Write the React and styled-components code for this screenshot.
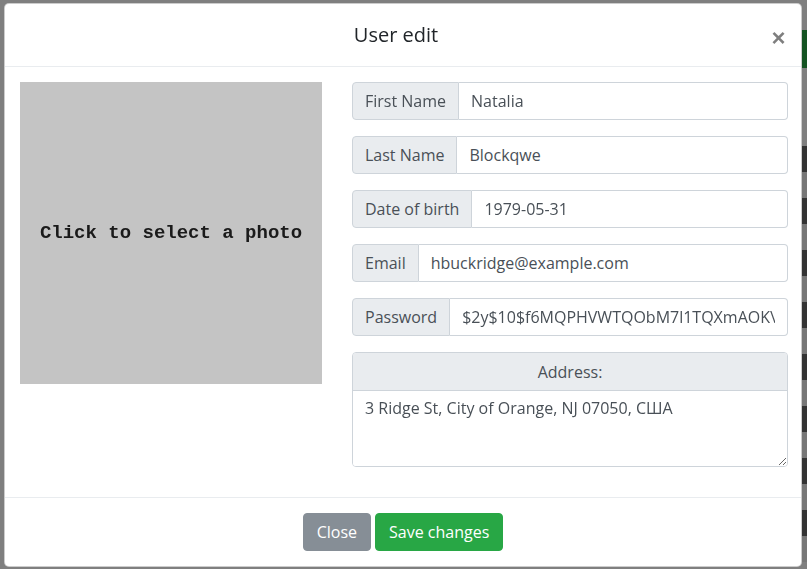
import styled, { createGlobalStyle } from 'styled-components'

const GlobalStyle = createGlobalStyle`
  html, body {
    margin: 0;
    padding: 0;
    height: 100%;
    overflow: hidden;
    background: #ffffff;
    font-family: "Open Sans", "Liberation Sans", sans-serif;
  }
  * { box-sizing: border-box; }
`

const fields = [
  { label: 'First Name', value: 'Natalia' },
  { label: 'Last Name', value: 'Blockqwe' },
  { label: 'Date of birth', value: '1979-05-31' },
  { label: 'Email', value: 'hbuckridge@example.com' },
  { label: 'Password', value: '$2y$10$f6MQPHVWTQObM7l1TQXmAOK\\' },
]

export default function App() {
  return (
    <>
      <GlobalStyle />
      <PageBehind>
        <BehindColumn>
          <BehindButton />
          <BehindBadge />
          {Array.from({ length: 16 }).map((_, i) => (
            <BehindRow key={i} $dark={i % 2 === 0} />
          ))}
        </BehindColumn>
      </PageBehind>
      <Backdrop>
        <Modal>
          <Header>
            <Title>User edit</Title>
            <CloseX type="button">×</CloseX>
          </Header>
          <Body>
            <Photo>Click to select a photo</Photo>
            <Form>
              {fields.map((f) => (
                <InputGroup key={f.label}>
                  <Prepend>{f.label}</Prepend>
                  <Input defaultValue={f.value} />
                </InputGroup>
              ))}
              <AddressCard>
                <AddressHead>Address:</AddressHead>
                <AddressArea defaultValue="3 Ridge St, City of Orange, NJ 07050, США" />
              </AddressCard>
            </Form>
          </Body>
          <Footer>
            <Button $color="#868e96">Close</Button>
            <Button $color="#28a745">Save changes</Button>
          </Footer>
        </Modal>
      </Backdrop>
    </>
  )
}

const PageBehind = styled.div`
  height: 569px;
  display: flex;
  justify-content: flex-end;
`

const BehindColumn = styled.div`
  width: 40px;
  display: flex;
  flex-direction: column;
  padding-top: 30px;
`

const BehindButton = styled.div`
  height: 38px;
  background: #28a745;
`

const BehindBadge = styled.div`
  height: 12px;
  margin: 36px 0 30px;
  background: #c08040;
  width: 8px;
  margin-left: 6px;
`

const BehindRow = styled.div`
  height: 26px;
  background: ${(p) => (p.$dark ? '#666666' : '#eeeeee')};
`

const Backdrop = styled.div`
  position: fixed;
  inset: 0;
  background: rgba(0, 0, 0, 0.5);
  padding: 3px 0 0 4px;
`

const Modal = styled.div`
  width: 798px;
  height: 564px;
  background: #fff;
  border: 1px solid rgba(0, 0, 0, 0.2);
  border-radius: 5px;
  display: flex;
  flex-direction: column;
`

const Header = styled.div`
  display: flex;
  align-items: center;
  padding: 16px 15px 16px 16px;
  border-bottom: 1px solid #e9ecef;
`

const Title = styled.h5`
  flex: 1;
  margin: 0;
  text-align: center;
  font-size: 20px;
  font-weight: 400;
  line-height: 30px;
  color: #212529;
`

const CloseX = styled.button`
  border: 0;
  background: transparent;
  padding: 0;
  width: 15px;
  margin-top: 6px;
  font-family: "Liberation Sans", sans-serif;
  font-size: 24px;
  font-weight: 700;
  line-height: 1;
  color: #000;
  opacity: 0.5;
  cursor: pointer;
`

const Body = styled.div`
  flex: 1;
  display: grid;
  grid-template-columns: 302px 1fr;
  gap: 30px;
  padding: 15px 13px 0 15px;
  align-items: start;
`

const Photo = styled.div`
  height: 302px;
  background: #c4c4c4;
  display: flex;
  align-items: center;
  justify-content: center;
  font-family: "Liberation Mono", "Courier New", monospace;
  font-weight: 700;
  font-size: 19px;
  color: #1a1a1a;
  cursor: pointer;
`

const Form = styled.div`
  display: flex;
  flex-direction: column;
  gap: 16px;
`

const InputGroup = styled.div`
  display: flex;
  height: 38px;
`

const Prepend = styled.span`
  display: flex;
  align-items: center;
  padding: 0 12px;
  background: #e9ecef;
  border: 1px solid #ced4da;
  border-radius: 4px 0 0 4px;
  font-size: 16px;
  color: #495057;
  white-space: nowrap;
`

const Input = styled.input`
  flex: 1;
  min-width: 0;
  border: 1px solid #ced4da;
  border-left: 0;
  border-radius: 0 4px 4px 0;
  padding: 0 12px;
  font-family: inherit;
  font-size: 16px;
  color: #495057;
  background: #fff;
`

const AddressCard = styled.div`
  display: flex;
  flex-direction: column;
  border: 1px solid #ced4da;
  border-radius: 4px;
  overflow: hidden;
`

const AddressHead = styled.div`
  height: 37px;
  display: flex;
  align-items: center;
  justify-content: center;
  background: #e9ecef;
  font-size: 16px;
  color: #495057;
`

const AddressArea = styled.textarea`
  height: 76px;
  border: 0;
  border-top: 1px solid #ced4da;
  padding: 5px 12px;
  font-family: inherit;
  font-size: 16px;
  line-height: 24px;
  color: #495057;
  resize: vertical;
`

const Footer = styled.div`
  display: flex;
  justify-content: center;
  gap: 4px;
  padding: 15px 16px 15px;
  border-top: 1px solid #e9ecef;
`

const Button = styled.button`
  height: 38px;
  padding: 0 13px;
  border: 1px solid ${(p) => p.$color};
  background: ${(p) => p.$color};
  color: #fff;
  font-family: inherit;
  font-size: 16px;
  border-radius: 4px;
  cursor: pointer;
`
